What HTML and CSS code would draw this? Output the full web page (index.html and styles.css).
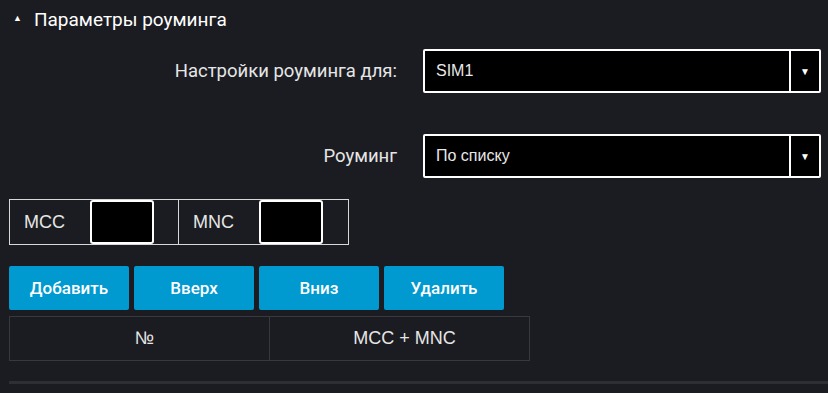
FILE: index.html
```html
<!DOCTYPE html>
<html>
<head>
    <title>Параметры роуминга</title>
    <meta name="viewport" content="width=device-width, initial-scale=1.0">
    <link rel="stylesheet" href="styles.css">
</head>
<body>
    <div class="panel">
        <!-- Header -->
        <div class="panel-head">
            <span class="caret">&#9650;</span>
            <span class="panel-title">Параметры роуминга</span>
        </div>

        <!-- Settings -->
        <div class="form-row first">
            <label class="form-label">Настройки роуминга для:</label>
            <div class="select">
                <span class="select-value">SIM1</span>
                <span class="select-arrow">&#9660;</span>
            </div>
        </div>

        <div class="form-row second">
            <label class="form-label">Роуминг</label>
            <div class="select">
                <span class="select-value">По списку</span>
                <span class="select-arrow">&#9660;</span>
            </div>
        </div>

        <!-- MCC / MNC -->
        <div class="code-row">
            <div class="code-cell">
                <span class="code-label">MCC</span>
                <div class="code-input"></div>
            </div>
            <div class="code-cell">
                <span class="code-label">MNC</span>
                <div class="code-input"></div>
            </div>
        </div>

        <!-- Buttons -->
        <div class="actions">
            <button class="btn">Добавить</button>
            <button class="btn">Вверх</button>
            <button class="btn">Вниз</button>
            <button class="btn">Удалить</button>
        </div>

        <table class="list">
            <tr>
                <th>№</th>
                <th>MCC + MNC</th>
            </tr>
        </table>

        <div class="divider"></div>
    </div>
</body>
</html>
```

FILE: styles.css
```css
body {
    margin: 0;
    background: #1b1c21;
    font-family: Roboto, 'Liberation Sans', sans-serif;
    color: #e8e8e8;
    overflow: hidden;
}

.panel {
    padding-left: 9px;
}

/* Header */
.panel-head {
    height: 38px;
    display: flex;
    align-items: center;
    padding-left: 4px;
}

.caret {
    font-size: 9px;
    color: #fff;
    margin-right: 12px;
    margin-top: -2px;
}

.panel-title {
    font-size: 19px;
    color: #fff;
}

/* Form rows */
.form-row {
    display: grid;
    grid-template-columns: 388px 398px;
    column-gap: 26px;
    align-items: center;
}

.form-row.first {
    margin-top: 11px;
}

.form-row.second {
    margin-top: 41px;
}

.form-label {
    text-align: right;
    font-size: 18.5px;
    color: #e6e6e6;
}

.select {
    height: 44px;
    box-sizing: border-box;
    border: 2px solid #fff;
    border-radius: 2px;
    background: #000;
    display: flex;
    align-items: stretch;
}

.select-value {
    flex: 1;
    display: flex;
    align-items: center;
    padding-left: 11px;
    font-family: 'Liberation Sans', Arial, sans-serif;
    font-size: 16px;
    color: #e8e8e8;
    border-right: 2px solid #fff;
}

.select-arrow {
    width: 28px;
    display: flex;
    align-items: center;
    justify-content: center;
    font-size: 10px;
    color: #fff;
}

/* MCC / MNC */
.code-row {
    display: flex;
    margin-top: 21px;
    width: 340px;
}

.code-cell {
    width: 170px;
    height: 46px;
    box-sizing: border-box;
    border: 1px solid #d8d8d8;
    display: flex;
    align-items: stretch;
}

.code-cell + .code-cell {
    margin-left: -1px;
    width: 171px;
}

.code-label {
    width: 80px;
    display: flex;
    align-items: center;
    padding-left: 14px;
    box-sizing: border-box;
    font-family: 'Liberation Sans', Arial, sans-serif;
    font-size: 18px;
    color: #e6e6e6;
}

.code-input {
    width: 64px;
    box-sizing: border-box;
    border: 2px solid #fff;
    border-radius: 3px;
    background: #000;
}

/* Buttons */
.actions {
    display: flex;
    gap: 5px;
    margin-top: 21px;
}

.btn {
    width: 120px;
    height: 44px;
    border: none;
    border-radius: 2px;
    background: #0099d0;
    color: #fff;
    font-family: Roboto, 'Liberation Sans', sans-serif;
    font-size: 17px;
    font-weight: 500;
    padding: 0;
}

/* Table */
.list {
    border-collapse: collapse;
    margin-top: 6px;
}

.list th {
    height: 43px;
    width: 249px;
    border: 1px solid #38393e;
    font-family: 'Liberation Sans', Arial, sans-serif;
    font-weight: normal;
    font-size: 18px;
    color: #e6e6e6;
    padding: 0 0 0 10px;
}

.divider {
    height: 3px;
    background: #2e2f35;
    margin-top: 20px;
}
```
